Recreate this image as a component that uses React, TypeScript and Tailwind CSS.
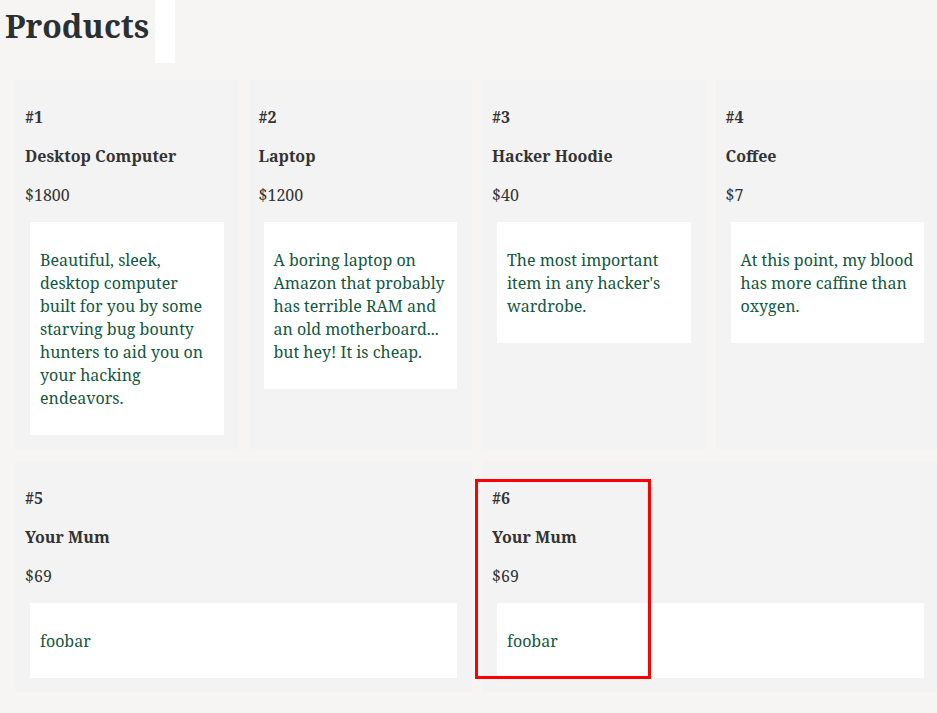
import React from "react";

type P = { id: number; name: string; price: string; desc: string; span?: boolean };

const products: P[] = [
  { id: 1, name: "Desktop Computer", price: "$1800", desc: "Beautiful, sleek, desktop computer built for you by some starving bug bounty hunters to aid you on your hacking endeavors." },
  { id: 2, name: "Laptop", price: "$1200", desc: "A boring laptop on Amazon that probably has terrible RAM and an old motherboard... but hey! It is cheap." },
  { id: 3, name: "Hacker Hoodie", price: "$40", desc: "The most important item in any hacker's wardrobe." },
  { id: 4, name: "Coffee", price: "$7", desc: "At this point, my blood has more caffine than oxygen." },
  { id: 5, name: "Your Mum", price: "$69", desc: "foobar", span: true },
  { id: 6, name: "Your Mum", price: "$69", desc: "foobar", span: true },
];

function Card({ p }: { p: P }) {
  return (
    <div className={`relative bg-[#f3f3f3] px-[10px] pt-[26px] pb-[14px] self-stretch ${p.span ? "col-span-2" : ""}`}>
      <div className="font-bold text-[#333333] leading-[23px] mb-[16px]">#{p.id}</div>
      <div className="font-bold text-[#333333] leading-[23px] mb-[16px]">{p.name}</div>
      <div className="text-[#333333] leading-[23px] mb-[15px]">{p.price}</div>
      <div className="bg-white mx-[5px] px-[10px] pt-[27px] pb-[25px] text-[#12573f] leading-[23px]">{p.desc}</div>
      {p.id === 6 && (
        <div className="absolute left-[-7px] top-[18px] w-[176px] h-[200px] border-[3px] border-[#ff0000] pointer-events-none" />
      )}
    </div>
  );
}

export default function App() {
  return (
    <div
      className="min-h-[713px] w-[937px] overflow-hidden bg-[#f6f5f3] text-[16px]"
      style={{ fontFamily: '"Noto Serif", "DejaVu Serif", "Liberation Serif", serif' }}
    >
      <div className="flex items-start">
        <h1 className="pl-[5px] pt-[2px] text-[32px] font-bold leading-[48px] text-[#2b3033]">Products</h1>
        <div className="ml-[6px] w-[20px] h-[63px] bg-white" />
      </div>
      <div className="pl-[15px] pt-[17px]">
        <div className="grid w-[924px] grid-cols-4 gap-x-[10px] gap-y-[11.5px]">
          {products.map((p) => (
            <Card key={p.id} p={p} />
          ))}
        </div>
      </div>
    </div>
  );
}
